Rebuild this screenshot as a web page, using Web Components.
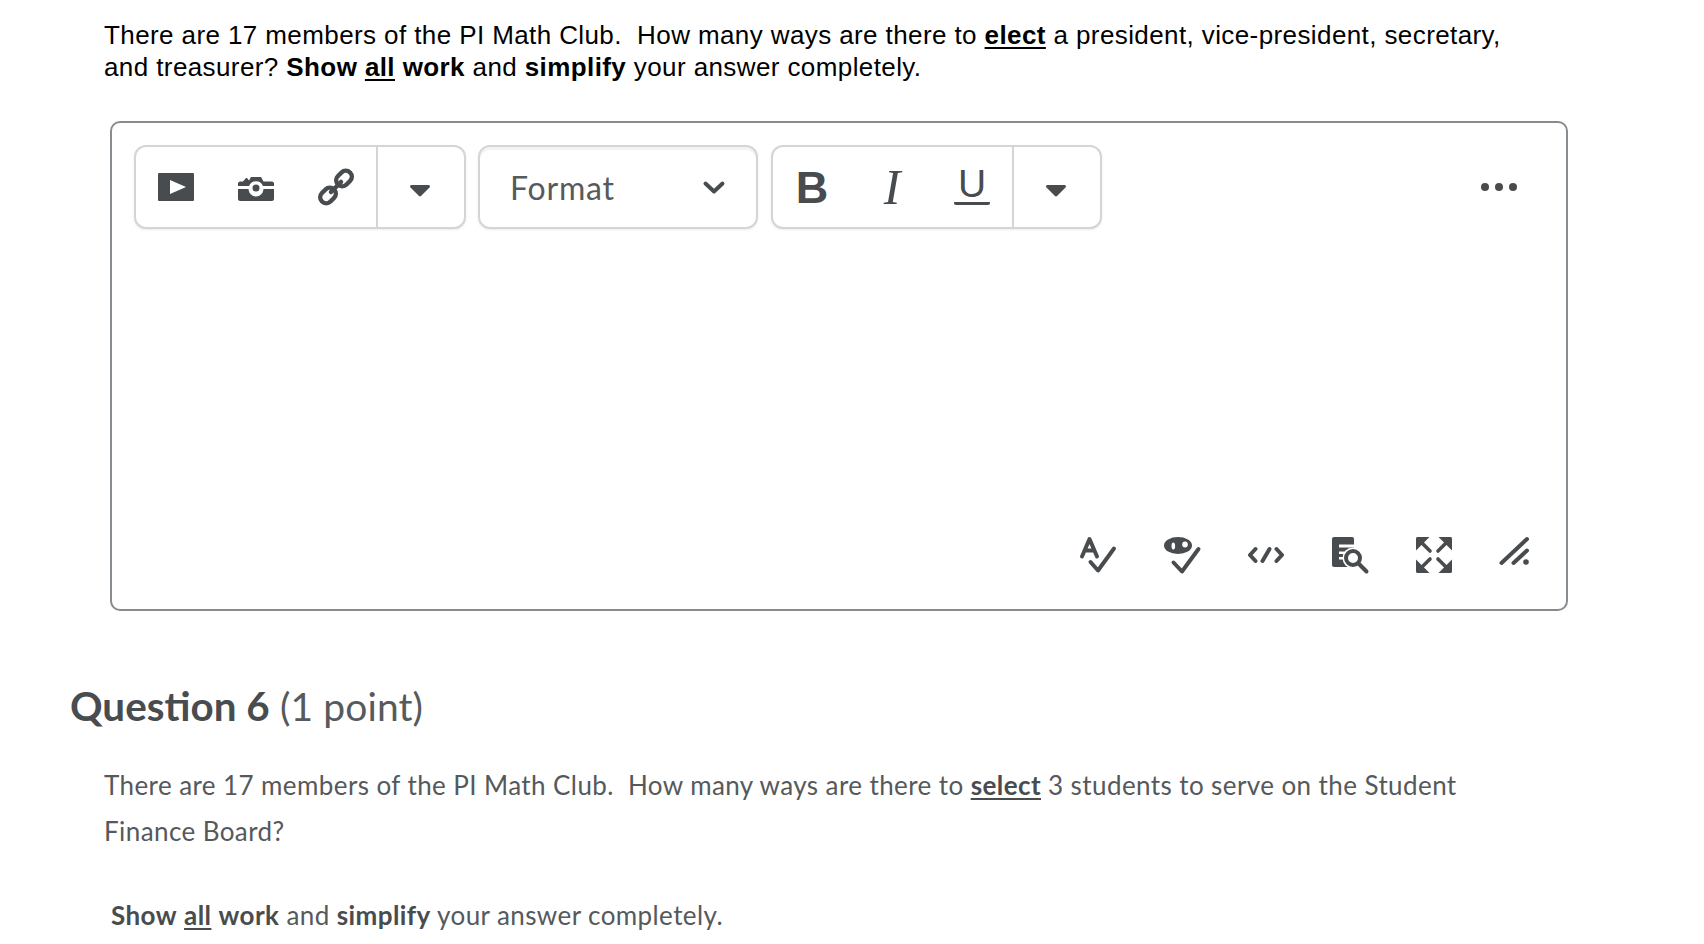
<!DOCTYPE html>
<html>
<head>
<meta charset="utf-8">
<title>Quiz</title>
<style>
  html, body { margin: 0; padding: 0; background: #fff; overflow: hidden; }
  body { width: 1704px; height: 944px; }
</style>
</head>
<body>
<quiz-page>
  <question-text kind="plain">
    There are 17 members of the PI Math Club.&nbsp; How many ways are there to <b class="u">elect</b> a president, vice-president, secretary,<br>and treasurer? <b>Show</b> <b class="u">all</b> <b>work</b> and <b>simplify</b> your answer completely.
  </question-text>
  <html-editor></html-editor>
  <question-heading number="6" points="(1 point)"></question-heading>
  <question-text kind="body">
    There are 17 members of the PI Math Club.&nbsp; How many ways are there to <b class="u">select</b> 3 students to serve on the Student<br>Finance Board?
  </question-text>
  <question-text kind="note"><b>Show</b> <b class="u">all</b> <b>work</b> and <b>simplify</b> your answer completely.</question-text>
</quiz-page>

<script>
const ICONS = {
  play: '<path fill-rule="evenodd" d="M1 0h34a1 1 0 0 1 1 1v26a1 1 0 0 1-1 1H1a1 1 0 0 1-1-1V1a1 1 0 0 1 1-1zm11 7v14l16-7z"/>',
  camera: '<path fill-rule="evenodd" d="M0 9.500c0-1 1-2 2-2h3l3-3.500h1l2 2.500 2-3.500h10l2.500 4.500H34c1 0 2 1 2 2V12H25a7.500 7.500 0 0 0-14 0H0zM0 15h10.500a7.500 7.500 0 0 0 15 0H36v10c0 1-1 2-2 2H2c-1 0-2-1-2-2z"/><circle cx="18" cy="14" r="3.500"/>',
  link: '<g fill="none" stroke="currentColor" stroke-width="4.500" stroke-linecap="round"><rect x="17.500" y="3.500" width="17" height="12" rx="6" transform="rotate(-45 26 9.500)"/><rect x="1.500" y="20.500" width="17" height="12" rx="6" transform="rotate(-45 10 26.500)"/><path d="M13 23l10-10"/></g>',
  caret: '<path d="M1.500 0h17c1.300 0 2 1.500 1 2.500l-8.500 8.500c-.6.6-1.400.6-2 0L.5 2.500C-.5 1.500.2 0 1.500 0z"/>',
  chevron: '<path d="M2.500 2.500L11 10.500 19.500 2.500" fill="none" stroke="currentColor" stroke-width="4" stroke-linecap="round" stroke-linejoin="round"/>',
  spell: '<g fill="none" stroke="currentColor" stroke-width="4" stroke-linecap="round" stroke-linejoin="round"><path d="M2 19.500L9.500 2 17 19.500M5 13.500h9"/><path d="M10.500 25l7.500 8.500L34 11.500"/></g>',
  preview: '<ellipse cx="14" cy="8.500" rx="14" ry="8.500"/><ellipse cx="9.300" cy="9" rx="1.800" ry="3.500" fill="#fff"/><ellipse cx="21" cy="7.500" rx="2.800" ry="3" fill="#fff"/><path d="M9.500 25.500l8.500 9L34.500 12" fill="none" stroke="currentColor" stroke-width="4" stroke-linecap="round" stroke-linejoin="round"/>',
  code: '<g fill="none" stroke="currentColor" stroke-width="4" stroke-linecap="round" stroke-linejoin="round"><path d="M7.500 12L2 18l5.500 6M28.500 12L34 18l-5.500 6M14.500 24L21.500 12"/></g>',
  find: '<rect width="22" height="30" rx="2"/><path d="M7 7.500h17v3H7zM7 14.500h8v2.500H7zM7 20h5v2.500H7z" fill="#fff"/><circle cx="21" cy="21" r="10.500" fill="#fff"/><g fill="none" stroke="currentColor" stroke-width="4" stroke-linecap="round"><circle cx="21" cy="21" r="7"/><path d="M26.500 26.500l8 8"/></g>',
  fullscreen: '<g id="fs"><path d="M1.500 0H13.500L0 13.500V1.500C0 .7.700 0 1.500 0z"/><path d="M6 6l8 8" fill="none" stroke="currentColor" stroke-width="3.600" stroke-linecap="round"/></g><use href="#fs" transform="matrix(-1 0 0 1 36 0)"/><use href="#fs" transform="matrix(1 0 0 -1 0 36)"/><use href="#fs" transform="matrix(-1 0 0 -1 36 36)"/>',
  resize: '<g fill="none" stroke="currentColor" stroke-width="4" stroke-linecap="round"><path d="M5.500 26L31 2M17.500 26L31 13.500"/></g><circle cx="30" cy="25" r="2.800"/>'
};

class QuizPage extends HTMLElement {
  constructor() {
    super();
    this.attachShadow({ mode: 'open' });
    this.shadowRoot.innerHTML = `
      <style>
        :host { display: flex; flex-direction: column; box-sizing: border-box; width: 1704px; height: 944px; overflow: hidden; }
      </style>
      <slot></slot>
    `;
  }
}

class QuestionText extends HTMLElement {
  constructor() {
    super();
    this.attachShadow({ mode: 'open' });
    this.shadowRoot.innerHTML = `
      <style>
        :host { display: block; letter-spacing: .41px; flex: none; white-space: nowrap; }
        :host([kind="plain"]) {
          font: 26px/32px "Liberation Sans", Arial, sans-serif;
          letter-spacing: .4px;
          color: #000;
          margin: 19px 180px 0 104px;
        }
        :host([kind="body"]) {
          font: 26px/46px Lato, sans-serif;
          color: #55595b;
          margin: 31px 204px 0 104px;
        }
        :host([kind="note"]) {
          font: 26px/46px Lato, sans-serif;
          color: #55595b;
          margin: 38px 130px 0 111px;
        }
        :host(:not([kind="plain"])) ::slotted(b) { color: #494c4e; }
        ::slotted(.u) { text-decoration: underline; text-decoration-thickness: 2px; text-underline-offset: 3px; }
      </style>
      <slot></slot>
    `;
  }
}

class ToolIcon extends HTMLElement {
  static get observedAttributes() {
    return ['icon', 'w', 'h'];
  }
  constructor() {
    super();
    this.attachShadow({ mode: 'open' });
  }
  connectedCallback() {
    this.render();
  }
  attributeChangedCallback() {
    this.render();
  }
  render() {
    const name = this.getAttribute('icon');
    const w = this.getAttribute('w') || 36;
    const h = this.getAttribute('h') || 36;
    this.shadowRoot.innerHTML = `
      <style>
        :host { display: flex; align-items: center; justify-content: center; color: #494c4e; flex: none; }
        svg { display: block; fill: currentColor; overflow: visible; }
      </style>
      <svg width="${w}" height="${h}" viewBox="0 0 ${w} ${h}">${ICONS[name] || ''}</svg>
    `;
  }
}

class ToolGroup extends HTMLElement {
  constructor() {
    super();
    this.attachShadow({ mode: 'open' });
    this.shadowRoot.innerHTML = `
      <style>
        :host {
          display: flex;
          box-sizing: border-box;
          height: 84px;
          border: 2px solid #d3d5d6;
          border-radius: 12px;
          background: #fff;
          box-shadow: 0 1px 2px rgba(86, 90, 92, .12);
          flex: none;
        }
        :host([tight]) ::slotted(:first-child) { margin-left: -1px; }
      </style>
      <slot></slot>
    `;
  }
}

class ToolButton extends HTMLElement {
  constructor() {
    super();
    this.attachShadow({ mode: 'open' });
    this.shadowRoot.innerHTML = `
      <style>
        :host { display: flex; align-items: center; justify-content: center; width: 80px; height: 100%; box-sizing: border-box; color: #494c4e; }
        :host([more]) { width: 88px; border-left: 2px solid #d3d5d6; padding-top: 7px; padding-right: 3px; }
      </style>
      <slot></slot>
    `;
  }
}

class FormatSelect extends HTMLElement {
  constructor() {
    super();
    this.attachShadow({ mode: 'open' });
    this.shadowRoot.innerHTML = `
      <style>
        :host {
          display: flex;
          align-items: center;
          justify-content: space-between;
          box-sizing: border-box;
          width: 280px;
          height: 84px;
          margin-left: -1px;
          padding: 0 31px 0 30px;
          border: 2px solid #d3d5d6;
          border-radius: 12px;
          box-shadow: inset 0 3px 0 #f1f4f6, 0 1px 2px rgba(86, 90, 92, .12);
          font: 32px Lato, sans-serif;
          letter-spacing: .8px;
          color: #565a5c;
          flex: none;
        }
      </style>
      <span>Format</span>
      <tool-icon icon="chevron" w="22" h="13"></tool-icon>
    `;
  }
}

class HtmlEditor extends HTMLElement {
  constructor() {
    super();
    this.attachShadow({ mode: 'open' });
    this.shadowRoot.innerHTML = `
      <style>
        :host {
          display: flex;
          flex-direction: column;
          justify-content: space-between;
          box-sizing: border-box;
          width: 1458px;
          height: 490px;
          margin: 38px 0 0 110px;
          padding: 22px 34px 36px 22px;
          border: 2px solid #868c90;
          border-radius: 10px;
          flex: none;
        }
        .toolbar { display: flex; align-items: center; gap: 13px; }
        .dots { margin-left: auto; display: flex; gap: 6px; margin-right: 15px; }
        .dots i { width: 8px; height: 8px; border-radius: 50%; background: #494c4e; }
        .bottom { display: flex; justify-content: flex-end; gap: 48px; }
        .last { margin-left: -4px; }
        .b { font: 700 45px/1 "Liberation Sans", sans-serif; }
        .i { font: italic 50px/1 "Liberation Serif", serif; }
        .u { display: block; width: 36px; text-align: center; font: 39px/28px "Liberation Sans", sans-serif; padding-bottom: 4px; border-bottom: 3px solid #494c4e; border-radius: 2px; }
      </style>
      <div class="toolbar">
        <tool-group>
          <tool-button><tool-icon icon="play" w="36" h="28"></tool-icon></tool-button>
          <tool-button><tool-icon icon="camera" w="36" h="27"></tool-icon></tool-button>
          <tool-button><tool-icon icon="link"></tool-icon></tool-button>
          <tool-button more><tool-icon icon="caret" w="20" h="12"></tool-icon></tool-button>
        </tool-group>
        <format-select></format-select>
        <tool-group tight>
          <tool-button><span class="b">B</span></tool-button>
          <tool-button><span class="i">I</span></tool-button>
          <tool-button><span class="u">U</span></tool-button>
          <tool-button more><tool-icon icon="caret" w="20" h="12"></tool-icon></tool-button>
        </tool-group>
        <div class="dots"><i></i><i></i><i></i></div>
      </div>
      <div class="bottom">
        <tool-icon icon="spell"></tool-icon>
        <tool-icon icon="preview"></tool-icon>
        <tool-icon icon="code"></tool-icon>
        <tool-icon icon="find"></tool-icon>
        <tool-icon icon="fullscreen"></tool-icon>
        <tool-icon class="last" icon="resize"></tool-icon>
      </div>
    `;
  }
}

class QuestionHeading extends HTMLElement {
  constructor() {
    super();
    this.attachShadow({ mode: 'open' });
  }
  connectedCallback() {
    const number = this.getAttribute('number');
    const points = this.getAttribute('points');
    this.shadowRoot.innerHTML = `
      <style>
        :host { display: block; flex: none; margin: 70px 0 0 70px; font: 40px/50px Lato, sans-serif; color: #494c4e; }
        strong { font-weight: 700; font-size: 40.4px; }
        span { color: #565a5c; font-size: 39px; letter-spacing: .1px; }
      </style>
      <strong>Question ${number}</strong> <span>${points}</span>
    `;
  }
}

customElements.define('quiz-page', QuizPage);
customElements.define('question-text', QuestionText);
customElements.define('tool-icon', ToolIcon);
customElements.define('tool-group', ToolGroup);
customElements.define('tool-button', ToolButton);
customElements.define('format-select', FormatSelect);
customElements.define('html-editor', HtmlEditor);
customElements.define('question-heading', QuestionHeading);
</script>
</body>
</html>
